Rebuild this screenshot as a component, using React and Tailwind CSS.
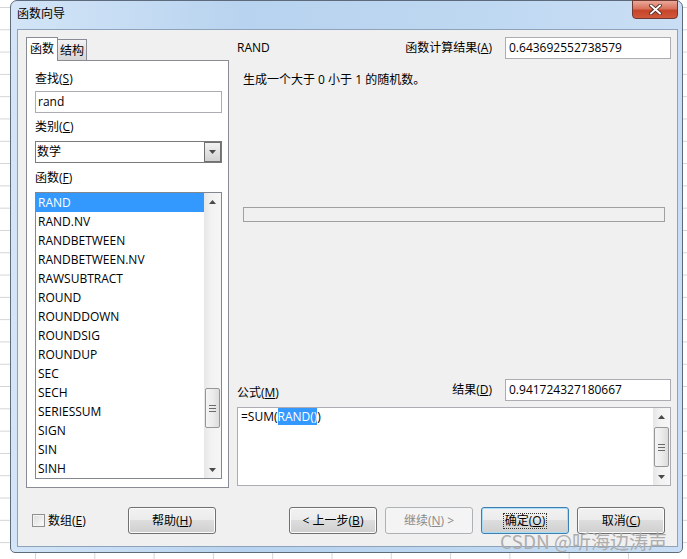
import React from "react";

const items = [
  "RAND",
  "RAND.NV",
  "RANDBETWEEN",
  "RANDBETWEEN.NV",
  "RAWSUBTRACT",
  "ROUND",
  "ROUNDDOWN",
  "ROUNDSIG",
  "ROUNDUP",
  "SEC",
  "SECH",
  "SERIESSUM",
  "SIGN",
  "SIN",
  "SINH",
];

const Arrow = ({ up }) => (
  <svg width="7" height="4" viewBox="0 0 7 4">
    <path d={up ? "M0 4 L3.5 0 L7 4Z" : "M0 0 L7 0 L3.5 4Z"} fill="#4a4a4a" />
  </svg>
);

const ScrollBar = ({ thumb }) => (
  <div className="w-[17px] h-full flex flex-col bg-[linear-gradient(90deg,#e6e6e6,#f2f2f2_40%,#f6f6f6)]">
    <div className="h-[17px] flex items-center justify-center">
      <Arrow up />
    </div>
    <div className="flex-1 flex flex-col items-center">
      <div
        className={
          thumb +
          " w-[15px] border border-[#979797] rounded-[2px] bg-[linear-gradient(90deg,#f4f4f4,#ececec_50%,#dcdcdc)] flex flex-col items-center justify-center gap-[2px]"
        }
      >
        <div className="w-[7px] h-px bg-[#6a6a6a]" />
        <div className="w-[7px] h-px bg-[#6a6a6a]" />
        <div className="w-[7px] h-px bg-[#6a6a6a]" />
      </div>
    </div>
    <div className="h-[17px] flex items-center justify-center">
      <Arrow />
    </div>
  </div>
);

const Btn = ({ children, kind }) => {
  let cls =
    "w-[88px] h-[27px] rounded-[3px] border flex items-center justify-center text-[12px] ";
  if (kind === "default")
    cls +=
      "border-[#3c7fb1] shadow-[inset_0_0_0_1px_#a9dcf7] bg-[linear-gradient(#f2f2f2,#ebebeb_50%,#dddddd_50%,#cfcfcf)] text-black";
  else if (kind === "disabled")
    cls += "border-[#adb2b5] bg-[#f4f4f4] text-[#8a8a8a]";
  else
    cls +=
      "border-[#707070] shadow-[inset_0_0_0_1px_#fcfcfc] bg-[linear-gradient(#f2f2f2,#ebebeb_50%,#dddddd_50%,#cfcfcf)] text-black";
  return <div className={cls}>{children}</div>;
};

export default function App() {
  return (
    <div className="w-[687px] h-[559px] overflow-hidden relative bg-white bg-[linear-gradient(#d4d4d4_1px,transparent_1px),linear-gradient(90deg,#d4d4d4_1px,transparent_1px)] bg-[size:59.3px_22.3px] bg-[position:35px_7px] pl-[10px] font-['Open_Sans','Noto_Sans_CJK_SC',sans-serif] text-[12px] text-black">
      <div className="w-[673px] h-[553px] border border-[#5d6b7c] rounded-t-[7px] rounded-b-[5px] flex flex-col bg-[linear-gradient(90deg,#d3e5f7,#b8d3ef_35%,#bdd7f1_65%,#c9def4)]">
        {/* title bar */}
        <div className="h-[28px] flex items-start justify-between">
          <div className="pl-[6px] pt-[5px] leading-[16px] text-[12px]">函数向导</div>
          <div className="-mt-px mr-[4px] w-[46px] h-[19px] rounded-b-[4px] border border-[#6f3a33] bg-[linear-gradient(#eaa897,#d8735c_45%,#c7452b_55%,#d0583a)] flex items-center justify-center">
            <svg width="13" height="11" viewBox="0 0 13 11">
              <path d="M2 1.5 L11 9.5 M11 1.5 L2 9.5" stroke="#4a2a26" strokeWidth="3.6" strokeLinecap="square" />
              <path d="M2 1.5 L11 9.5 M11 1.5 L2 9.5" stroke="#ffffff" strokeWidth="1.9" strokeLinecap="square" />
            </svg>
          </div>
        </div>

        {/* client */}
        <div className="ml-[6px] w-[661px] h-[518px] border border-[#8ea3bb] bg-[#f0f0f0] flex flex-col">
          <div className="flex pl-[8px] pt-[7px]">
            {/* left tab column */}
            <div className="w-[203px] flex flex-col">
              <div className="flex items-end -mb-px relative z-10">
                <div className="w-[32px] h-[24px] border border-b-0 border-[#898c95] bg-white flex justify-center pt-[3px] leading-[16px]">
                  函数
                </div>
                <div className="w-[29px] h-[22px] border border-l-0 border-[#898c95] bg-[linear-gradient(#f3f3f3,#e4e4e4_50%,#d6d6d6)] flex justify-center pt-[3px] leading-[16px]">
                  结构
                </div>
              </div>
              <div className="h-[428px] border border-[#898c95] bg-white pl-[8px] pt-[8px] flex flex-col">
                <div className="h-[20px] leading-[20px]">
                  查找(<u>S</u>)
                </div>
                <div className="mt-[2px] w-[187px] h-[22px] border border-[#abadb3] bg-white pl-[2px] leading-[20px]">
                  rand
                </div>
                <div className="mt-[4px] h-[20px] leading-[20px]">
                  类别(<u>C</u>)
                </div>
                <div className="mt-[4px] w-[187px] h-[22px] border border-[#7a7a7a] bg-white flex items-center">
                  <div className="flex-1 pl-[1px] leading-[20px]">数学</div>
                  <div className="w-[17px] h-[20px] border border-[#707070] bg-[linear-gradient(#f2f2f2,#e2e2e2_50%,#d2d2d2)] flex items-center justify-center">
                    <Arrow />
                  </div>
                </div>
                <div className="mt-[5px] h-[20px] leading-[20px]">
                  函数(<u>F</u>)
                </div>
                <div className="mt-[4px] w-[187px] h-[287px] border border-[#828790] bg-white flex">
                  <div className="flex-1 flex flex-col">
                    {items.map((it, i) => (
                      <div
                        key={it}
                        className={
                          i === 0
                            ? "h-[19px] leading-[19px] pl-[2px] bg-[#3399ff] text-white"
                            : "h-[19px] leading-[19px] pl-[2px]"
                        }
                      >
                        {it}
                      </div>
                    ))}
                  </div>
                  <ScrollBar thumb="mt-[178px] h-[40px]" />
                </div>
              </div>
            </div>

            {/* right column */}
            <div className="ml-[8px] w-[434px] flex flex-col">
              <div className="h-[22px] flex items-center">
                <span>RAND</span>
                <span className="ml-auto mr-[13px]">
                  函数计算结果(<u>A</u>)
                </span>
                <div className="w-[166px] h-[22px] border border-[#abadb3] bg-white pl-[3px] leading-[20px]">
                  0.643692552738579
                </div>
              </div>
              <div className="mt-[13px] pl-[6px] leading-[16px]">生成一个大于 0 小于 1 的随机数。</div>
              <div className="mt-[119px] ml-[6px] w-[422px] h-[15px] border border-[#a0a0a0] bg-[#f0f0f0]" />
              <div className="mt-[157px] h-[22px] flex items-center">
                <span className="self-end leading-[16px]">
                  公式(<u>M</u>)
                </span>
                <span className="ml-auto mr-[13px]">
                  结果(<u>D</u>)
                </span>
                <div className="w-[166px] h-[22px] border border-[#abadb3] bg-white pl-[3px] leading-[20px]">
                  0.941724327180667
                </div>
              </div>
              <div className="mt-[6px] w-[434px] h-[79px] border border-[#abadb3] bg-white flex">
                <div className="flex-1 pl-[3px] pt-[1px] leading-[16px]">
                  =SUM(<span className="bg-[#3399ff] text-white">RAND()</span>)
                </div>
                <div className="w-[16px] mr-px">
                  <ScrollBar thumb="mt-[2px] h-[40px]" />
                </div>
              </div>
            </div>
          </div>

          {/* bottom buttons */}
          <div className="mt-[19px] h-[27px] flex items-center pl-[14px]">
            <div className="w-[96px] flex items-center">
              <div className="w-[13px] h-[13px] border border-[#8f8f8f] bg-[linear-gradient(135deg,#dcdcdc,#fbfbfb)] shadow-[inset_0_0_0_1px_#f4f4f4]" />
              <span className="ml-[3px]">
                数组(<u>E</u>)
              </span>
            </div>
            <Btn>
              帮助(<u>H</u>)
            </Btn>
            <div className="ml-[73px] flex gap-[8px]">
              <Btn>
                &lt; 上一步(<u>B</u>)
              </Btn>
              <Btn kind="disabled">
                继续(<u>N</u>) &gt;
              </Btn>
              <Btn kind="default">
                <span className="border border-dotted border-[#333] px-px leading-[14px]">
                  确定(<u>O</u>)
                </span>
              </Btn>
              <Btn>
                取消(<u>C</u>)
              </Btn>
            </div>
          </div>
        </div>
      </div>

      <div className="absolute left-[500px] top-[530px] text-[19px] leading-[22px] text-[#adadad] font-['Noto_Sans_CJK_SC',sans-serif]">
        CSDN @听海边涛声
      </div>
    </div>
  );
}
